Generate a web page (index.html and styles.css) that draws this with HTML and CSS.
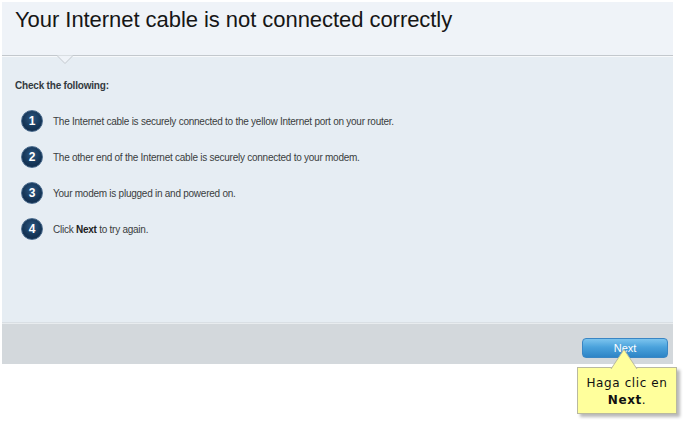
FILE: index.html
```html
<!DOCTYPE html>
<html>
<head>
<meta charset="utf-8">
<link rel="stylesheet" href="styles.css">
</head>
<body>
<div class="panel">
  <div class="header">
    <h1 class="title">Your Internet cable is not connected correctly</h1>
    <svg class="notch" width="16" height="10" viewBox="0 0 16 10">
      <path d="M0 0.5 L8 8.5 L16 0.5" fill="#eff3f8" stroke="#c3c8cd" stroke-width="1"/>
    </svg>
  </div>
  <div class="content">
    <p class="lead">Check the following:</p>
    <ol class="steps">
      <li class="step"><span class="num">1</span><span class="txt">The Internet cable is securely connected to the yellow Internet port on your router.</span></li>
      <li class="step"><span class="num">2</span><span class="txt">The other end of the Internet cable is securely connected to your modem.</span></li>
      <li class="step"><span class="num">3</span><span class="txt">Your modem is plugged in and powered on.</span></li>
      <li class="step"><span class="num">4</span><span class="txt">Click <b>Next</b> to try again.</span></li>
    </ol>
  </div>
  <div class="footer">
    <button class="next">Next</button>
  </div>
</div>
<div class="callout">
  <svg class="callout-arrow" width="40" height="22" viewBox="0 0 40 22">
    <path d="M7 21 L20 1.5 L33 21" fill="#ffff9c" stroke="#b9b9a0" stroke-width="1"/>
  </svg>
  <div class="callout-box">Haga clic en<br><b>Next</b>.</div>
</div>
</body>
</html>
```
FILE: styles.css
```css
html, body {
  margin: 0;
  padding: 0;
  background: #ffffff;
}
body {
  font-family: "Liberation Sans", Arial, sans-serif;
  position: relative;
  width: 687px;
  height: 424px;
  overflow: hidden;
}
.panel {
  margin: 2px 0 0 2px;
  width: 671px;
}
.header {
  position: relative;
  height: 53px;
  background: #eff3f8;
  border-bottom: 1px solid #c3c8cd;
  box-shadow: 0 1px 0 #f7f9fb;
}
.title {
  margin: 0;
  padding: 6px 0 0 13px;
  font-weight: normal;
  font-size: 22px;
  letter-spacing: -0.05px;
  color: #161616;
  line-height: 24px;
}
.notch {
  position: absolute;
  left: 55px;
  top: 53px;
  display: block;
}
.content {
  height: 266px;
  background: #e6edf3;
  margin-top: 1px;
  padding: 23px 0 0 13px;
  box-sizing: border-box;
  border-bottom: 1px solid #d9dfe4;
}
.lead {
  margin: 0;
  font-size: 10px;
  letter-spacing: -0.2px;
  font-weight: bold;
  color: #333a40;
}
.steps {
  list-style: none;
  margin: 19px 0 0 6px;
  padding: 0;
  display: flex;
  flex-direction: column;
  gap: 14px;
}
.step {
  display: flex;
  align-items: center;
  gap: 10px;
  height: 22px;
}
.num {
  width: 20px;
  height: 20px;
  border-radius: 50%;
  background: radial-gradient(circle at 50% 38%, #2c5782 0%, #163759 55%, #0d2442 100%);
  border: 1px solid #4a6b8d;
  color: #ffffff;
  font-weight: bold;
  font-size: 12px;
  display: flex;
  align-items: center;
  justify-content: center;
  flex: none;
}
.txt {
  font-size: 10px;
  letter-spacing: -0.25px;
  color: #3a3d40;
}
.txt b {
  color: #222;
}
.footer {
  height: 41px;
  background: #d3d8dc;
  border-top: 1px solid #e8ecef;
  display: flex;
  justify-content: flex-end;
  align-items: flex-start;
  padding: 14px 5px 0 0;
  box-sizing: border-box;
}
.next {
  width: 86px;
  height: 20px;
  border: 1px solid #3a86c4;
  border-radius: 4px;
  background: linear-gradient(to bottom, #7cc4ee 0%, #4aa2dc 45%, #2e84c6 100%);
  color: #ffffff;
  font-family: "Liberation Sans", Arial, sans-serif;
  font-size: 11px;
  padding: 0;
  line-height: 18px;
}
.callout {
  position: absolute;
  left: 577px;
  top: 348px;
  width: 100px;
}
.callout-arrow {
  position: absolute;
  left: 27px;
  top: 0;
  z-index: 2;
  display: block;
}
.callout-box {
  margin-top: 19px;
  height: 47px;
  box-sizing: border-box;
  background: #ffff9c;
  border: 1px solid #b9b9a0;
  box-shadow: 3px 3px 3px rgba(0, 0, 0, 0.28);
  font-family: "DejaVu Sans", Verdana, sans-serif;
  font-size: 12px;
  letter-spacing: 0.6px;
  line-height: 17px;
  color: #111;
  text-align: center;
  padding-top: 7px;
}
```
